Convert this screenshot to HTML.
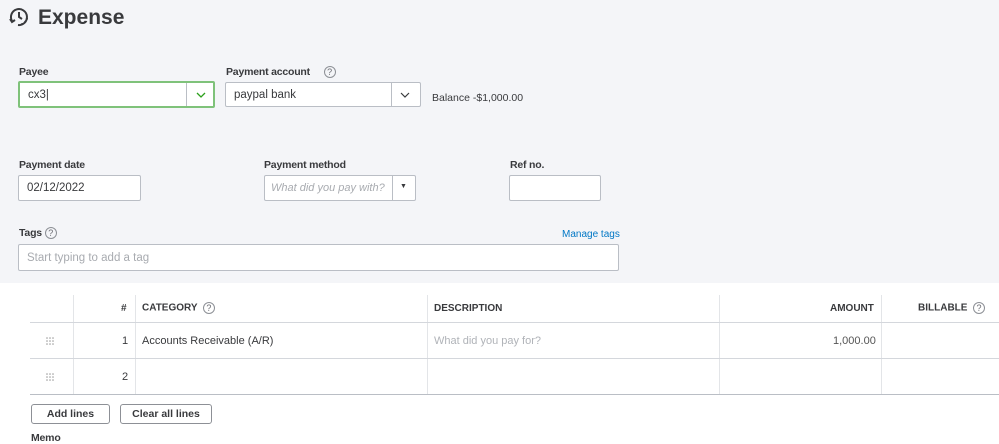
<!DOCTYPE html>
<html><head><meta charset="utf-8"><style>
*{box-sizing:border-box;margin:0;padding:0}
body{width:999px;height:442px;overflow:hidden;background:#fff;font-family:"Liberation Sans",Arial,sans-serif;color:#393a3d;position:relative}
.top{position:absolute;left:0;top:0;width:999px;height:283px;background:#f4f5f8}
.a{position:absolute;white-space:nowrap}
.lbl{font-size:10.5px;color:#393a3d;font-weight:bold;letter-spacing:-0.2px}
.inp{position:absolute;background:#fff;border:1px solid #babec5;border-radius:2px;font-size:11.5px;color:#393a3d;padding-left:8px;display:flex;align-items:center}
.q{display:inline-block;width:12px;height:12px;border:1px solid #8d9096;border-radius:50%;font-size:9px;line-height:10px;text-align:center;color:#6b6c72;font-weight:normal;vertical-align:middle}
.vl{position:absolute;width:1px;background:#e3e5e8}
.hl{position:absolute;height:1px;background:#d4d7dc}
.th{font-size:10px;font-weight:bold;color:#393a3d}
.td{font-size:11px;color:#393a3d}
.btn{position:absolute;border:1px solid #8d9096;border-radius:3px;background:#fff;font-size:10.5px;font-weight:bold;text-align:center;line-height:18px;color:#393a3d}
</style></head><body>
<div class="top"></div>
<svg class="a" style="left:8px;top:6px" width="22" height="22" viewBox="0 0 22 22" fill="none" stroke="#393a3d" stroke-width="2">
<path d="M4 15 A8 8 0 1 1 10 19"/>
<path d="M13 18.5 A8 8 0 0 0 19 12" stroke-dasharray="2 2"/>
<path d="M11 6 V11 L14 13"/>
<path d="M2 13 L4 16 L7 14"/>
</svg>
<div class="a" style="left:38px;top:6px;font-size:21px;font-weight:bold;color:#393a3d">Expense</div>

<div class="a lbl" style="left:19px;top:66px">Payee</div>
<div class="inp" style="left:18px;top:81px;width:197px;height:27px;border:2px solid #7fc27a">cx3|</div>
<div class="vl" style="left:186px;top:83px;height:23px;background:#babec5"></div>
<svg class="a" style="left:196px;top:92px" width="10" height="6"><path d="M1 1 L5 5 L9 1" stroke="#2ca01c" stroke-width="1.3" fill="none"/></svg>

<div class="a lbl" style="left:226px;top:66px">Payment account &nbsp;&nbsp;&nbsp; <span class="q">?</span></div>
<div class="inp" style="left:225px;top:82px;width:196px;height:25px">paypal bank</div>
<div class="vl" style="left:391px;top:82px;height:25px;background:#babec5"></div>
<svg class="a" style="left:400px;top:92px" width="10" height="6"><path d="M1 1 L5 5 L9 1" stroke="#393a3d" stroke-width="1.2" fill="none"/></svg>
<div class="a" style="left:432px;top:92px;font-size:10.5px">Balance -$1,000.00</div>

<div class="a lbl" style="left:19px;top:159px">Payment date</div>
<div class="inp" style="left:18px;top:175px;width:123px;height:26px">02/12/2022</div>
<div class="a lbl" style="left:264px;top:159px">Payment method</div>
<div class="inp" style="left:264px;top:175px;width:152px;height:26px;color:#a8abb0;font-style:italic;font-size:11px;padding-left:6px">What did you pay with?</div>
<div class="vl" style="left:392px;top:175px;height:26px;background:#babec5"></div>
<div class="a" style="left:400px;top:183px;font-size:7px">▼</div>
<div class="a lbl" style="left:510px;top:159px">Ref no.</div>
<div class="inp" style="left:509px;top:175px;width:92px;height:26px"></div>

<div class="a lbl" style="left:19px;top:227px">Tags <span class="q">?</span></div>
<div class="a" style="left:562px;top:229px;font-size:10px;color:#0077c5">Manage tags</div>
<div class="inp" style="left:18px;top:244px;width:601px;height:27px;color:#a8abb0;padding-left:8px">Start typing to add a tag</div>

<div class="vl" style="left:73px;top:295px;height:99px"></div>
<div class="vl" style="left:135px;top:295px;height:99px"></div>
<div class="vl" style="left:427px;top:295px;height:99px"></div>
<div class="vl" style="left:719px;top:295px;height:99px"></div>
<div class="vl" style="left:881px;top:295px;height:99px"></div>
<div class="hl" style="left:30px;top:322px;width:969px"></div>
<div class="hl" style="left:30px;top:358px;width:969px"></div>
<div class="hl" style="left:30px;top:394px;width:969px;background:#babec5"></div>

<div class="a th" style="left:121px;top:303px">#</div>
<div class="a th" style="left:142px;top:302px">CATEGORY &nbsp;<span class="q">?</span></div>
<div class="a th" style="left:434px;top:303px">DESCRIPTION</div>
<div class="a th" style="left:830px;top:303px">AMOUNT</div>
<div class="a th" style="left:918px;top:302px">BILLABLE &nbsp;<span class="q">?</span></div>

<svg class="a" style="left:46px;top:337px" width="8" height="8" fill="#999"><circle cx="1" cy="1" r=".8"/><circle cx="4" cy="1" r=".8"/><circle cx="7" cy="1" r=".8"/><circle cx="1" cy="4" r=".8"/><circle cx="4" cy="4" r=".8"/><circle cx="7" cy="4" r=".8"/><circle cx="1" cy="7" r=".8"/><circle cx="4" cy="7" r=".8"/><circle cx="7" cy="7" r=".8"/></svg>
<div class="a td" style="left:122px;top:335px">1</div>
<div class="a td" style="left:142px;top:335px">Accounts Receivable (A/R)</div>
<div class="a td" style="left:434px;top:335px;color:#b0b3b8">What did you pay for?</div>
<div class="a td" style="left:833px;top:335px;color:#555">1,000.00</div>
<svg class="a" style="left:46px;top:373px" width="8" height="8" fill="#999"><circle cx="1" cy="1" r=".8"/><circle cx="4" cy="1" r=".8"/><circle cx="7" cy="1" r=".8"/><circle cx="1" cy="4" r=".8"/><circle cx="4" cy="4" r=".8"/><circle cx="7" cy="4" r=".8"/><circle cx="1" cy="7" r=".8"/><circle cx="4" cy="7" r=".8"/><circle cx="7" cy="7" r=".8"/></svg>
<div class="a td" style="left:122px;top:371px">2</div>

<div class="btn" style="left:31px;top:404px;width:79px;height:20px">Add lines</div>
<div class="btn" style="left:120px;top:404px;width:92px;height:20px">Clear all lines</div>
<div class="a lbl" style="left:31px;top:432px">Memo</div>
</body></html>
